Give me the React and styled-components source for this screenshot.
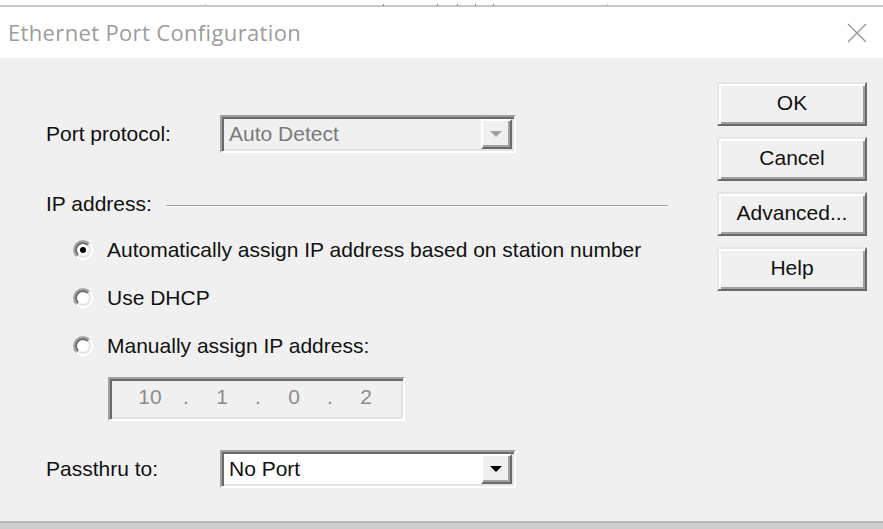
import React from "react";
import styled, { createGlobalStyle } from "styled-components";

const GlobalStyle = createGlobalStyle`
  html, body {
    margin: 0;
    padding: 0;
    width: 883px;
    height: 529px;
    overflow: hidden;
    background: #ffffff;
  }
  * { box-sizing: border-box; }
`;

const UI_FONT = `"Liberation Sans", Arial, sans-serif`;

const Window = styled.div`
  width: 883px;
  height: 529px;
  display: flex;
  flex-direction: column;
  font-family: ${UI_FONT};
  font-size: 21px;
  color: #111;
`;

/* thin edge of the window lying behind the dialog */
const TopEdge = styled.div`
  position: relative;
  height: 7px;
  background: #ffffff;
  border-bottom: 2px solid #c6c6c6;
`;

const Tick = styled.span`
  position: absolute;
  left: ${(p) => p.$x}px;
  top: 4px;
  width: 1px;
  height: 2px;
  background: ${(p) => (p.$faint ? "#c4c4c4" : "#a08080")};
`;

const TitleBar = styled.div`
  height: 51px;
  display: flex;
  align-items: center;
  justify-content: space-between;
  padding: 0 16px 2px 8px;
  background: #ffffff;
`;

const Title = styled.span`
  font-family: "Open Sans", "Noto Sans", sans-serif;
  font-size: 22px;
  letter-spacing: 0.35px;
  color: #9c9c9c;
`;

const CloseIcon = styled.svg`
  width: 20px;
  height: 20px;
  margin-top: 2px;
`;

const Body = styled.div`
  flex: 1;
  display: flex;
  background: #f0f0f0;
`;

const BottomEdge = styled.div`
  height: 8px;
  background: #cdcdcd;
  border-top: 2px solid #b8b8b8;
`;

const FormColumn = styled.div`
  width: 668px;
  padding: 57px 0 0 46px;
  display: flex;
  flex-direction: column;
`;

const FieldRow = styled.div`
  display: grid;
  grid-template-columns: 174px 296px;
  align-items: center;
  height: 38px;
  margin-top: ${(p) => p.$top || 0}px;
`;

const Label = styled.span`
  white-space: nowrap;
`;

const Combo = styled.div`
  height: 38px;
  display: flex;
  border: 2px solid;
  border-color: #a0a0a0 #ffffff #ffffff #a0a0a0;
  box-shadow: inset 2px 2px 0 #696969, inset -2px -2px 0 #e3e3e3;
  background: ${(p) => (p.$disabled ? "#f0f0f0" : "#ffffff")};
  padding: 2px;
`;

const ComboValue = styled.span`
  flex: 1;
  display: flex;
  align-items: center;
  padding-left: 5px;
  color: ${(p) => (p.$disabled ? "#7a7a7a" : "#111")};
`;

const DropButton = styled.span`
  width: 31px;
  display: flex;
  align-items: center;
  justify-content: center;
  background: #f0f0f0;
  border: 2px solid;
  border-color: #ffffff #696969 #696969 #ffffff;
  box-shadow: inset -2px -2px 0 #a0a0a0;
`;

const Arrow = styled.span`
  width: 0;
  height: 0;
  margin: -1px 1px 0 0;
  border-left: 6px solid transparent;
  border-right: 6px solid transparent;
  border-top: 6px solid ${(p) => (p.$disabled ? "#a0a0a0" : "#000")};
`;

const SectionHeader = styled.div`
  display: flex;
  align-items: center;
  height: 24px;
  margin-top: 39px;
`;

const Etch = styled.span`
  flex: 1;
  height: 2px;
  margin: 4px 0 0 14px;
  border-top: 1px solid #a0a0a0;
  border-bottom: 1px solid #ffffff;
`;

const RadioList = styled.div`
  display: flex;
  flex-direction: column;
  gap: 24px;
  margin: 22px 0 0 27px;
`;

const RadioRow = styled.label`
  display: flex;
  align-items: center;
  gap: 14px;
  height: 24px;
  white-space: nowrap;
`;

const RadioOuter = styled.span`
  width: 20px;
  height: 20px;
  border-radius: 50%;
  border: 2px solid;
  border-color: #a6a6a6 #ffffff #ffffff #a6a6a6;
  display: flex;
`;

const RadioInner = styled.span`
  flex: 1;
  border-radius: 50%;
  border: 2px solid;
  border-color: #6a6a6a #e3e3e3 #e3e3e3 #6a6a6a;
  background: #ffffff;
  display: flex;
  align-items: center;
  justify-content: center;
`;

const RadioDot = styled.span`
  width: 6px;
  height: 6px;
  border-radius: 50%;
  background: #000;
`;

const AddressBox = styled.div`
  width: 297px;
  height: 44px;
  margin: 19px 0 0 62px;
  padding: 0 0 5px 10px;
  display: flex;
  align-items: center;
  border: 2px solid;
  border-color: #a0a0a0 #ffffff #ffffff #a0a0a0;
  box-shadow: inset 2px 2px 0 #696969, inset -2px -2px 0 #e3e3e3;
  background: #f0f0f0;
  color: #8c8c8c;
`;

const Octet = styled.span`
  width: 60px;
  text-align: center;
`;

const Dot = styled.span`
  width: 12px;
  text-align: center;
`;

const ButtonColumn = styled.div`
  width: 150px;
  margin-left: 49px;
  padding-top: 24px;
  display: flex;
  flex-direction: column;
  gap: 11px;
`;

const Button = styled.button`
  height: 44px;
  width: 150px;
  font-family: ${UI_FONT};
  font-size: 21px;
  color: #111;
  background: #f0f0f0;
  border: 2px solid;
  border-color: #e6e6e6 #696969 #696969 #e6e6e6;
  box-shadow: inset 2px 2px 0 #ffffff, inset -2px -2px 0 #a0a0a0;
  padding: 0 0 2px;
`;

const ticks = [
  { x: 205, faint: true },
  { x: 383 },
  { x: 437 },
  { x: 457 },
  { x: 475 },
  { x: 493 },
  { x: 607, faint: true },
];

function Radio({ checked, children }) {
  return (
    <RadioRow>
      <RadioOuter>
        <RadioInner>{checked && <RadioDot />}</RadioInner>
      </RadioOuter>
      {children}
    </RadioRow>
  );
}

export default function App() {
  const octets = ["10", "1", "0", "2"];
  return (
    <>
      <GlobalStyle />
      <Window>
        <TopEdge>
          {ticks.map((t) => (
            <Tick key={t.x} $x={t.x} $faint={t.faint} />
          ))}
        </TopEdge>
        <TitleBar>
          <Title>Ethernet Port Configuration</Title>
          <CloseIcon viewBox="0 0 20 20">
            <path d="M1 1 L19 19 M19 1 L1 19" stroke="#959595" strokeWidth="1.3" fill="none" />
          </CloseIcon>
        </TitleBar>
        <Body>
          <FormColumn>
            <FieldRow>
              <Label>Port protocol:</Label>
              <Combo $disabled>
                <ComboValue $disabled>Auto Detect</ComboValue>
                <DropButton>
                  <Arrow $disabled />
                </DropButton>
              </Combo>
            </FieldRow>

            <SectionHeader>
              <Label>IP address:</Label>
              <Etch />
            </SectionHeader>

            <RadioList>
              <Radio checked>Automatically assign IP address based on station number</Radio>
              <Radio>Use DHCP</Radio>
              <Radio>Manually assign IP address:</Radio>
            </RadioList>

            <AddressBox>
              {octets.map((o, i) => (
                <React.Fragment key={i}>
                  {i > 0 && <Dot>.</Dot>}
                  <Octet>{o}</Octet>
                </React.Fragment>
              ))}
            </AddressBox>

            <FieldRow $top={29}>
              <Label>Passthru to:</Label>
              <Combo>
                <ComboValue>No Port</ComboValue>
                <DropButton>
                  <Arrow />
                </DropButton>
              </Combo>
            </FieldRow>
          </FormColumn>

          <ButtonColumn>
            <Button>OK</Button>
            <Button>Cancel</Button>
            <Button>Advanced...</Button>
            <Button>Help</Button>
          </ButtonColumn>
        </Body>
        <BottomEdge />
      </Window>
    </>
  );
}
